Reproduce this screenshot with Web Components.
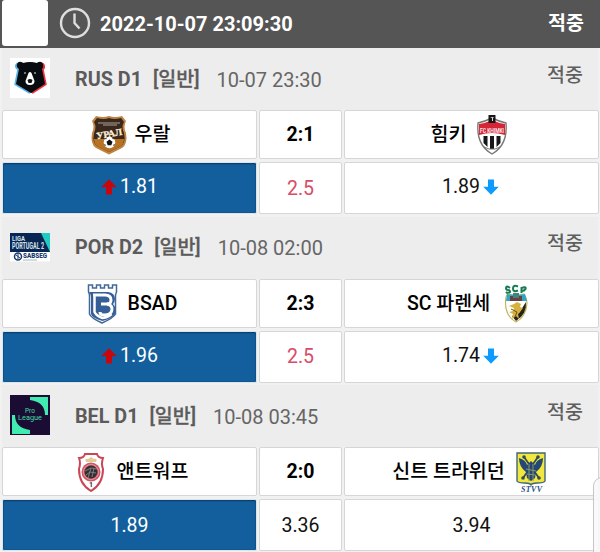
<!DOCTYPE html>
<html lang="ko">
<head>
<meta charset="utf-8">
<title>2022-10-07 23:09:30</title>
<style>
  body {
    margin: 0;
    width: 600px;
    height: 552px;
    overflow: hidden;
    background: #f1f1f1;
    font-family: Roboto, "Noto Sans CJK KR", sans-serif;
    font-size: 19.5px;
    line-height: 24px;
    color: #111;
  }
</style>
</head>
<body>
<bet-slip time="2022-10-07 23:09:30" result="적중">
  <bet-match league="RUS D1" date="10-07 23:30" result="적중" logo="rus" home="우랄" home-logo="ural" score="2:1" away="힘키" away-logo="khimki" odds="1.81,2.5,1.89" moves="up,,down"></bet-match>
  <bet-match league="POR D2" date="10-08 02:00" result="적중" logo="por" home="BSAD" home-logo="bsad" score="2:3" away="SC 파렌세" away-logo="farense" odds="1.96,2.5,1.74" moves="up,,down"></bet-match>
  <bet-match league="BEL D1" date="10-08 03:45" result="적중" logo="bel" home="앤트워프" home-logo="antwerp" score="2:0" away="신트 트라위던" away-logo="stvv" odds="1.89,3.36,3.94" moves=",,"></bet-match>
</bet-slip>

<script>
(function () {
    'use strict';

    // logos, all on a 40x40 grid
    const ICONS = {
        rus: `<rect width="40" height="40" fill="#fff"/>
          <path d="M7 6q2-4 6-1 7-2 14 0 4-3 6 1 1 3-1 5l3 15-14 9-15-9 3-15q-3-2-2-5z" fill="#55b5e5" transform="translate(-1.8 .8)"/>
          <path d="M7 6q2-4 6-1 7-2 14 0 4-3 6 1 1 3-1 5l3 15-14 9-15-9 3-15q-3-2-2-5z" fill="#ef3340" transform="translate(1.8 .8)"/>
          <path d="M7 6q2-4 6-1 7-2 14 0 4-3 6 1 1 3-1 5l3 15-14 9-15-9 3-15q-3-2-2-5z" fill="#080c10"/>
          <path d="M18.500 15q1.500-2 3 0l3 8q0 4-4.500 4t-4.500-4z" fill="#fff"/>
          <circle cx="15" cy="15" r=".8" fill="#fff"/><circle cx="25" cy="15" r=".8" fill="#fff"/>
          <path d="M17.500 22q2.500-2 5 0l-1 3h-3z" fill="#111"/>`,
        por: `<rect y="6" width="40" height="28.500" rx="1" fill="#fff"/>
          <path d="M0 6h40v19H0z" fill="#082653"/><path d="M31 6h9v19z" fill="#20cbc2"/>
          <text x="2" y="13.800" font-size="8" font-weight="700" fill="#d9e5ee" textLength="13" lengthAdjust="spacingAndGlyphs">LIGA</text>
          <text x="2" y="22.300" font-size="9" font-weight="700" fill="#d9e5ee" textLength="32" lengthAdjust="spacingAndGlyphs">PORTUGAL 2</text>
          <circle cx="8" cy="29.500" r="3.500" fill="none" stroke="#183c70" stroke-width="1.500"/>
          <path d="M6 28l4 3M8 27v5" stroke="#183c70"/>
          <text x="13" y="31" font-size="6.500" font-weight="900" fill="#183c70" textLength="24" lengthAdjust="spacingAndGlyphs">SABSEG</text>
          <path d="M13 33h14" stroke="#8fa2bb" stroke-width=".8"/>`,
        bel: `<rect width="40" height="40" fill="#1b0c33"/>
          <path d="M20 2h18v18h-3Q35 7 20 5z" fill="#41ebb0"/>
          <path d="M2 20h3q0 13 15 15v4H2z" fill="#41ebb0"/>
          <text x="20" y="17.500" font-size="6.500" text-anchor="middle" fill="#41dba9">Pro</text>
          <text x="8" y="25" font-size="7" fill="#41dba9" textLength="24" lengthAdjust="spacingAndGlyphs">League</text>`,
        ural: `<path d="M7 1q7 2 13 0 6 2 13 0l4 5q-3 6 0 12 2 11-4 15l-13 6.500L7 33Q1 29 3 18q3-6 0-12z" fill="#bd8443"/>
          <path d="M8 3q7 2 12 0 5 2 12 0l3 4q-3 5 0 11 2 10-3 13l-12 6-12-6Q3 28 5 18q3-6 0-11z" fill="#3a281d"/>
          <path d="M5 24h30q0 5-3 7l-12 6-12-6q-3-2-3-7z" fill="#b77322"/>
          <path d="M9 8h22M14 10h14" stroke="#aaa19a" stroke-width="1.200"/>
          <text x="7" y="22" font-family="Liberation Serif" font-size="9.500" font-weight="700" fill="#fff0d8" stroke="#fff0d8" stroke-width=".3" textLength="26" lengthAdjust="spacingAndGlyphs" transform="rotate(-10 20 18)">УРАЛ</text>
          <circle cx="20.500" cy="27.500" r="5.800" fill="#fff"/>
          <path d="M20.500 24.500l3 2.200-1.200 3.500h-3.600l-1.200-3.500zM16 23.500l2-1-1 2zM23 22.500l2 1-1 1zM15 29l1 2 1-1zM26 29l-1 2-1-1z" fill="#111"/>`,
        khimki: `<path d="M6 8q8-2 14-5 6 3 14 5 2 22-14 31Q4 30 6 8z" fill="#fff" stroke="#777" stroke-width="1.400"/>
          <path d="M7 9q7-1 13-4 6 3 13 4v11q-13-4-26 0z" fill="#d52536"/>
          <text x="8" y="17.500" font-size="6.500" fill="#fff" textLength="24" lengthAdjust="spacingAndGlyphs">FC KHIMKI</text>
          <path d="M11.500 21h4v11l-4-4zM18 21h4v13h-4zM24.500 21h4v7l-4 4z" fill="#17171b"/>
          <path d="M16.500 0h7v8h-7z" fill="#171717"/><path d="M18 2h4l-1 1v3h-1V3z" fill="#ddd"/>
          <path d="M12 32l5 2h6l5-2" stroke="#777" fill="none"/>`,
        bsad: `<path d="M6.500 8V1h4v3h4V1h4v3h4V1h4v3h4V1h4v7q-1 2-1 4v18q-2 4-13.500 9Q9 34 7.500 30V12q0-2-1-4z" fill="#fff" stroke="#416997" stroke-width="1.500"/>
          <path d="M7 8h19q7 1 7 7 0 3-2 5l2 3v7q-2 4-12.500 7Q10 34 9 30V13q0-2-2-5z" fill="#355f96"/>
          <path d="M11 11h12q6 0 6 5 0 4-4 4 5 1 5 5 0 6-8 6-4 0-4-3" fill="none" stroke="#fff" stroke-width="3"/>
          <path d="M12.500 11v17q2 4 8 6 6-1 9-4" fill="none" stroke="#fff" stroke-width="2.500"/>
          <path d="M19 20h7" stroke="#fff" stroke-width="3"/>`,
        farense: `<path d="M14 4q-4-3-4 0 0 2 2 2t2 2q-2 2-4 0M22 2.500q-5-2-5 2t5 2M25.500 9V4q5-2 4 1-1 2-4 2" fill="none" stroke="#177c52" stroke-width="2"/>
          <path d="M9.500 19q0-8 2.500-9 8 2 16 0 3 4 3 9-1 14-11 19Q10 33 9.500 19z" fill="#fff" stroke="#c3b35e" stroke-width="1.200"/>
          <path d="M11 10q9 2 18 0l2 7H10z" fill="#32a5c7"/>
          <path d="M14 12h12v5H14z" fill="#624147"/><path d="M17 9h6v5h-6z" fill="#43847c"/>
          <path d="M30 18q1 12-10 19l-4-5 7-3z" fill="#282316"/>
          <path d="M13 22l5-2 3-2 4 2-1 3 3 1-3 4-2 2 1 5-3-3-4 3 1-5-4-2 4-1 1-3z" fill="#d7b13e"/>
          <path d="M15 25l6 3-2 5" fill="none" stroke="#685522"/>`,
        antwerp: `<path d="M14 2h12q1 4 6 4-2 6 0 11 0 15-12 22Q8 32 8 17 10 11 8 6q5 0 6-4z" fill="#fff" stroke="#ca4657" stroke-width="2"/>
          <path d="M15 10q-2-4 2-3l3-2 3 2q4-1 2 3z" fill="#e3cb98"/>
          <circle cx="20" cy="20" r="9.500" fill="#cf5667"/><circle cx="20" cy="20" r="7.500" fill="none" stroke="#eaa5ae" stroke-width=".8"/>
          <circle cx="20" cy="20" r="6.500" fill="#303033"/>
          <path d="M14 19l6-3 6 1M20 16l-3 10M15 23l4-3 6 1M23 16l-2 9" fill="none" stroke="#898084" stroke-width=".9"/>
          <text x="20" y="35" font-size="7" font-weight="700" text-anchor="middle" fill="#333">1</text>`,
        stvv: `<path d="M6 1h28v28q-1 2-8 2-5 0-6 2-1-2-6-2-7 0-8-2z" fill="#f0e83f" stroke="#42667a" stroke-width="1.400"/>
          <path d="M12 26l15-21M28 26L13 5" stroke="#334a5c" stroke-width="1.800"/>
          <path d="M8 6q7 2 8 7l4-4 4 4q1-5 8-7 0 9-7 14l-1 6-4 3-4-3-1-6Q8 15 8 6z" fill="#254776"/>
          <path d="M18 12v17M22 12v17M15 17l10 2M16 22l8 1" stroke="#8a9965" stroke-width="1"/>
          <circle cx="13" cy="5" r="1.800" fill="#334a5c"/><circle cx="27" cy="5" r="1.800" fill="#334a5c"/>
          <circle cx="12" cy="26" r="1.800" fill="#334a5c"/><circle cx="28" cy="26" r="1.800" fill="#334a5c"/>
          <text x="10" y="39.800" font-family="Liberation Serif" font-size="8" font-weight="700" font-style="italic" fill="#2a5181" textLength="21">STVV</text>`
    };

    class TeamLogo extends HTMLElement {
        constructor() {
            super();
            this.attachShadow({ mode: 'open' });
        }

        connectedCallback() {
            this.shadowRoot.innerHTML = `
            <style>
              :host { display: block; flex: none; width: 40px; height: 40px; line-height: normal; }
              svg { display: block; overflow: visible; }
            </style>
            <svg width="40" height="40" viewBox="0 0 40 40">${ICONS[this.getAttribute('name')] || ''}</svg>`;
        }
    }

    class OddsArrow extends HTMLElement {
        constructor() {
            super();
            this.attachShadow({ mode: 'open' }).innerHTML = `
            <style>
              :host { display: block; width: 16px; height: 16px; color: #c8060d; }
              :host([dir="down"]) { color: #0e9bff; transform: rotate(180deg); }
              svg { display: block; }
            </style>
            <svg width="16" height="16" viewBox="0 0 16 16"><path d="M8 .3L15.800 8.200H11V15.500H5V8.200H.2z" fill="currentColor"/></svg>`;
        }
    }

    class BetCell extends HTMLElement {
        constructor() {
            super();
            this.attachShadow({ mode: 'open' }).innerHTML = `
            <style>
              :host {
                display: flex;
                align-items: center;
                justify-content: center;
                box-sizing: border-box;
                padding-top: 1px;
                background: #fff;
                border: 1px solid #d6d6d6;
                border-radius: 2px;
                white-space: nowrap;
              }
              :host([team]) { gap: 6px; font-weight: 500; color: #000; }
              :host([score]) { font-weight: 700; color: #000; }
              :host([move]) { gap: 3px; padding: 0 0 2px; }
              :host([move="down"]) { padding-right: 2px; }
              :host([line]) { color: #d84c68; }
              :host([picked]) {
                background: #135f9d;
                border-color: #dbe4ea;
                box-shadow: inset 0 1px 2px #073a66, inset 0 0 1px #073a66;
                color: #fff;
              }
            </style>
            <slot></slot>`;
        }
    }

    class LeagueBar extends HTMLElement {
        constructor() {
            super();
            this.attachShadow({ mode: 'open' }).innerHTML = `
            <style>
              :host {
                display: flex;
                align-items: center;
                box-sizing: border-box;
                height: 62px;
                margin: 0 2px;
                padding: 0 15px 2px 8px;
                background: #ededed;
                color: #666;
              }
              span { padding-top: 3px; }
              .name { margin-left: 25px; font-size: 19.8px; font-weight: 700; color: #5b5b5b; }
              .kind { margin-left: 11px; font-weight: 500; color: #5b5b5b; -webkit-text-stroke: 0.3px #5b5b5b; }
              .date { margin-left: 17px; font-size: 20px; }
              .result { margin: 0 0 8px auto; font-weight: 500; color: #5f5f5f; }
            </style>
            <slot name="logo"></slot>
            <span class="name"><slot name="name"></slot></span>
            <span class="kind">[일반]</span>
            <span class="date"><slot name="date"></slot></span>
            <span class="result"><slot name="result"></slot></span>`;
        }
    }

    class BetMatch extends HTMLElement {
        constructor() {
            super();
            this.attachShadow({ mode: 'open' });
        }

        connectedCallback() {
            const a = (n) => this.getAttribute(n);
            const odds = a('odds').split(',');
            const moves = a('moves').split(',');
            const arrow = (i) => moves[i] ? `<odds-arrow dir="${moves[i]}"></odds-arrow>` : '';
            const move = (i) => moves[i] ? `move="${moves[i]}"` : '';
            this.shadowRoot.innerHTML = `
            <style>
              :host { display: block; height: 168.5px; }
              .grid {
                display: grid;
                grid-template-columns: 255px 83px 255px;
                grid-template-rows: 49px 52px;
                gap: 3px 2px;
                padding-left: 2px;
              }
            </style>
            <league-bar>
              <team-logo slot="logo" name="${a('logo')}"></team-logo>
              <span slot="name">${a('league')}</span>
              <span slot="date">${a('date')}</span>
              <span slot="result">${a('result')}</span>
            </league-bar>
            <div class="grid">
              <bet-cell team><team-logo name="${a('home-logo')}"></team-logo><span>${a('home')}</span></bet-cell>
              <bet-cell score>${a('score')}</bet-cell>
              <bet-cell team><span>${a('away')}</span><team-logo name="${a('away-logo')}"></team-logo></bet-cell>
              <bet-cell picked ${move(0)}>${arrow(0)}<span>${odds[0]}</span></bet-cell>
              <bet-cell ${moves[0] ? 'line' : ''}>${odds[1]}</bet-cell>
              <bet-cell ${move(2)}><span>${odds[2]}</span>${arrow(2)}</bet-cell>
            </div>`;
        }
    }

    class BetSlip extends HTMLElement {
        constructor() {
            super();
            this.attachShadow({ mode: 'open' });
        }

        connectedCallback() {
            this.shadowRoot.innerHTML = `
            <style>
              :host { display: block; position: relative; height: 552px; overflow: hidden; }
              header {
                display: flex;
                align-items: center;
                box-sizing: border-box;
                height: 48px;
                padding: 0 16px 2px 2px;
                background: #555;
                color: #fff;
                font-weight: 700;
              }
              .check { width: 46px; height: 46px; border-radius: 3px; background: #fff; }
              svg { display: block; margin: 0 9px 0 11px; }
              span { padding-top: 1px; }
              .time { font-size: 20px; }
              .result { margin-left: auto; }
              /* edge panel handle over the right border */
              .handle {
                position: absolute;
                left: 593px;
                top: 477px;
                width: 20px;
                height: 90px;
                border: 1px solid #c6c6c6;
                border-radius: 9px;
                background: rgba(248,248,248,0.9);
              }
            </style>
            <header>
              <div class="check"></div>
              <svg width="32" height="32" viewBox="0 0 32 32" fill="none" stroke="#dedede" stroke-width="2.400">
                <circle cx="16" cy="16" r="14"/><path d="M15.500 6.500V16l5 5.500"/>
              </svg>
              <span class="time">${this.getAttribute('time')}</span>
              <span class="result">${this.getAttribute('result')}</span>
            </header>
            <slot></slot>
            <div class="handle"></div>`;
        }
    }

    customElements.define('team-logo', TeamLogo);
    customElements.define('odds-arrow', OddsArrow);
    customElements.define('bet-cell', BetCell);
    customElements.define('league-bar', LeagueBar);
    customElements.define('bet-match', BetMatch);
    customElements.define('bet-slip', BetSlip);
})();
</script>
</body>
</html>
